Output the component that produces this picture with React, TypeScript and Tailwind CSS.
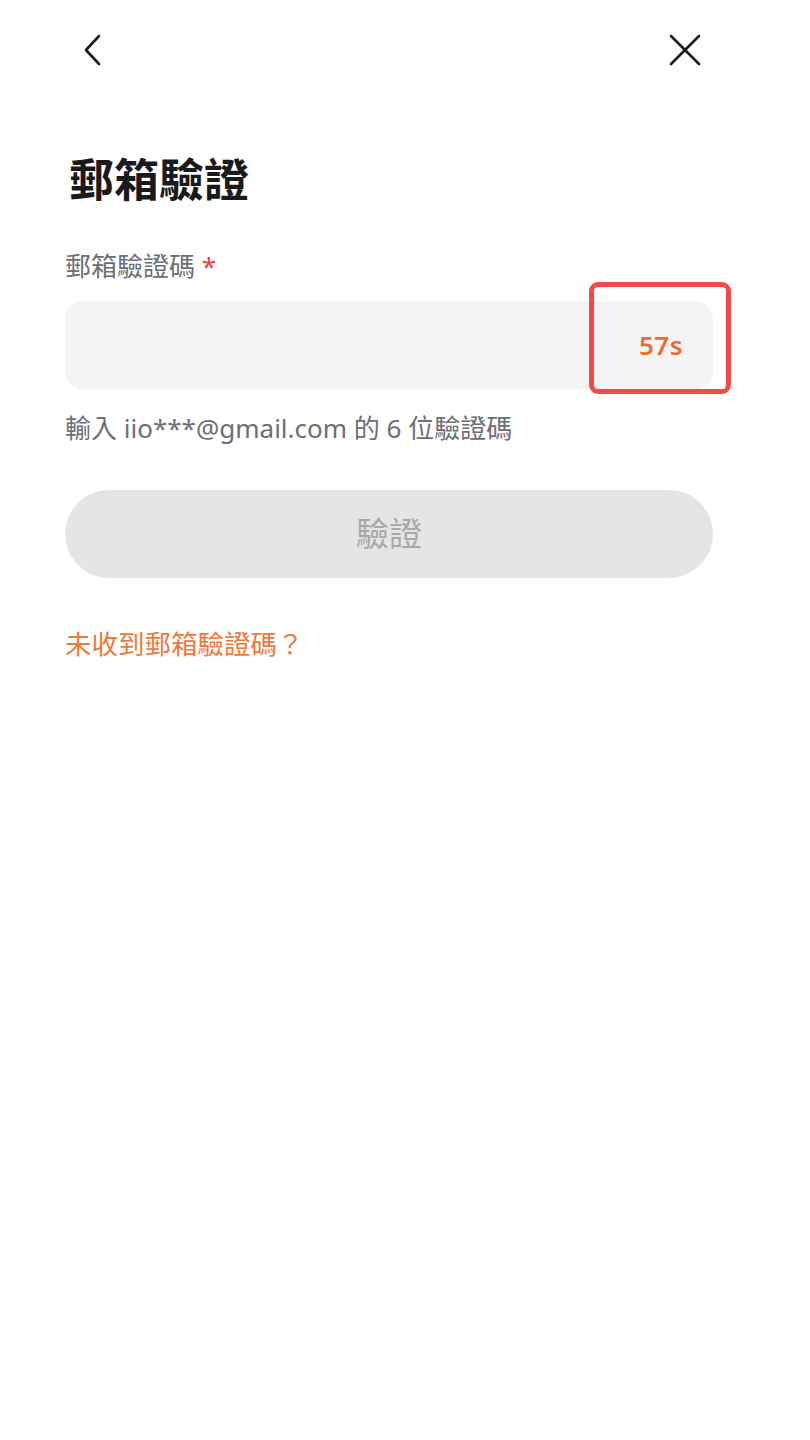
import React from "react";

const font = { fontFamily: '"Noto Sans", "Noto Sans CJK TC", sans-serif' };

export default function App() {
  return (
    <div className="relative w-[810px] h-[1440px] bg-white" style={font}>
      {/* top bar */}
      <div className="flex items-center justify-between h-[100px] pl-[80px] pr-[108px]">
        <svg width="26" height="34" viewBox="0 0 26 34" fill="none">
          <path d="M19 3 L6 17 L19 31" stroke="#1a1a1a" strokeWidth="2.6" strokeLinecap="round" strokeLinejoin="round" />
        </svg>
        <svg width="34" height="34" viewBox="0 0 34 34" fill="none">
          <path d="M3 3 L31 31 M31 3 L3 31" stroke="#1a1a1a" strokeWidth="2.6" strokeLinecap="round" />
        </svg>
      </div>

      <div className="px-[65px] pr-[97px]">
        <h1 className="mt-[50px] pl-[4px] text-[45px] leading-[60px] font-bold text-[#1a1a1a]">郵箱驗證</h1>

        <div className="mt-[39px] text-[26px] leading-[34px] text-[#6b6e78]">
          郵箱驗證碼 <span className="text-[#e5443c]">*</span>
        </div>

        <div className="mt-[18px] h-[88px] rounded-[18px] bg-[#f4f4f4] flex items-center justify-end pr-[30px]">
          <span className="text-[26px] font-semibold text-[#ef6b2d] tracking-[0.5px]">57s</span>
        </div>

        <div className="mt-[22px] text-[26px] leading-[34px] text-[#6b6e78]">
          輸入 iio***@gmail.com 的 6 位驗證碼
        </div>

        <div className="mt-[45px] h-[88px] rounded-full bg-[#e5e5e5] flex items-center justify-center">
          <span className="text-[33px] text-[#a9a9a9]">驗證</span>
        </div>

        <div className="mt-[48px] text-[26.5px] leading-[36px] text-[#f0783a]">未收到郵箱驗證碼？</div>
      </div>

      {/* annotation box */}
      <div className="absolute left-[589px] top-[282px] w-[142px] h-[112px] rounded-[9px] border-[5px] border-[#f24a48]" />
    </div>
  );
}
